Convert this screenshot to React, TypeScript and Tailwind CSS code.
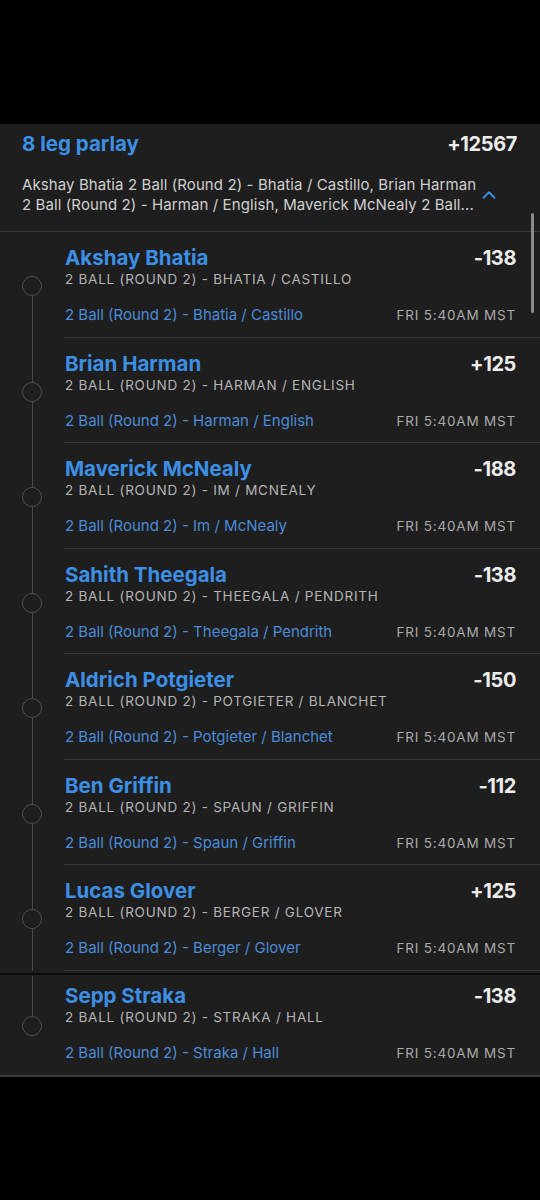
import React from 'react';
import { ChevronUp } from 'lucide-react';

type Leg = {
  name: string;
  odds: string;
  market: string;
  link: string;
};

const legs: Leg[] = [
  { name: 'Akshay Bhatia', odds: '-138', market: '2 Ball (Round 2) - Bhatia / Castillo', link: '2 Ball (Round 2) - Bhatia / Castillo' },
  { name: 'Brian Harman', odds: '+125', market: '2 Ball (Round 2) - Harman / English', link: '2 Ball (Round 2) - Harman / English' },
  { name: 'Maverick McNealy', odds: '-188', market: '2 Ball (Round 2) - Im / McNealy', link: '2 Ball (Round 2) - Im / McNealy' },
  { name: 'Sahith Theegala', odds: '-138', market: '2 Ball (Round 2) - Theegala / Pendrith', link: '2 Ball (Round 2) - Theegala / Pendrith' },
  { name: 'Aldrich Potgieter', odds: '-150', market: '2 Ball (Round 2) - Potgieter / Blanchet', link: '2 Ball (Round 2) - Potgieter / Blanchet' },
  { name: 'Ben Griffin', odds: '-112', market: '2 Ball (Round 2) - Spaun / Griffin', link: '2 Ball (Round 2) - Spaun / Griffin' },
  { name: 'Lucas Glover', odds: '+125', market: '2 Ball (Round 2) - Berger / Glover', link: '2 Ball (Round 2) - Berger / Glover' },
  { name: 'Sepp Straka', odds: '-138', market: '2 Ball (Round 2) - Straka / Hall', link: '2 Ball (Round 2) - Straka / Hall' },
];

const LegRow = ({ leg, first, last }: { leg: Leg; first: boolean; last: boolean }) => (
  <div className="flex">
    {/* timeline */}
    <div className="w-[64px] flex flex-col items-center shrink-0">
      <div className={`w-px ${last ? 'h-[40px]' : 'h-[44px]'} ${first ? 'bg-transparent' : 'bg-[#4a4a4a]'}`} />
      <div className="w-[20px] h-[20px] rounded-full border-[1.5px] border-[#4f4f4f]" />
      <div className={`w-px flex-1 ${last ? 'bg-transparent' : 'bg-[#4a4a4a]'}`} />
    </div>
    <div className={`flex-1 pl-px pr-[24px] ${last ? 'pt-[8px] pb-[12px]' : 'pt-[14px] pb-[11.5px] border-b border-[#3a3a3a]'}`}>
      <div className="flex justify-between items-center">
        <span className="text-[20.5px] leading-[24px] font-bold text-[#3c8fe4]">{leg.name}</span>
        <span className="text-[20px] leading-[24px] font-bold tracking-[-0.4px] text-[#ececec]">{leg.odds}</span>
      </div>
      <div className="text-[13.5px] leading-[18px] tracking-[0.75px] uppercase text-[#b4b4b4]">{leg.market}</div>
      <div className="flex justify-between items-center mt-[17px]">
        <span className="text-[15px] leading-[20px] text-[#4a8cd8]">{leg.link}</span>
        <span className="text-[13.5px] leading-[20px] tracking-[0.8px] text-[#a9a9a9]">FRI 5:40AM MST</span>
      </div>
    </div>
  </div>
);

export default function App() {
  return (
    <div className="w-[540px] h-[1200px] bg-black pt-[124px]" style={{ fontFamily: 'Inter, "Noto Sans", sans-serif' }}>
      <div className="relative bg-[#1e1e1e] border-b-2 border-[#3a3a3a]">
        {/* Header */}
        <div className="px-[22px] pt-[8px] pb-[16px] border-b border-[#3a3a3a]">
          <div className="flex justify-between items-center">
            <span className="text-[20.5px] leading-[24px] font-bold text-[#3c8fe4]">8 leg parlay</span>
            <span className="text-[20px] leading-[24px] font-bold tracking-[-0.4px] text-[#ececec] mr-[1px]">+12567</span>
          </div>
          <div className="flex items-center mt-[19px]">
            <p className="w-[458px] text-[15px] leading-[20px] tracking-[0.1px] text-[#cfcfcf]">
              Akshay Bhatia 2 Ball (Round 2) - Bhatia / Castillo, Brian Harman 2 Ball (Round 2) - Harman / English, Maverick McNealy 2 Ball...
            </p>
            <ChevronUp size={22} strokeWidth={2} className="-ml-[2px] text-[#3c8fe4]" />
          </div>
        </div>

        {/* Legs */}
        {legs.map((leg, i) => (
          <React.Fragment key={leg.name}>
            {i === legs.length - 1 && <div className="h-[2px] bg-[#0c0c0c] mt-[2px] mb-[1px]" />}
            <LegRow leg={leg} first={i === 0} last={i === legs.length - 1} />
          </React.Fragment>
        ))}

        {/* scroll indicator */}
        <div className="absolute left-[531px] top-[89px] w-[3px] h-[100px] rounded-full bg-[#8a8a8a]" />
      </div>
    </div>
  );
}
